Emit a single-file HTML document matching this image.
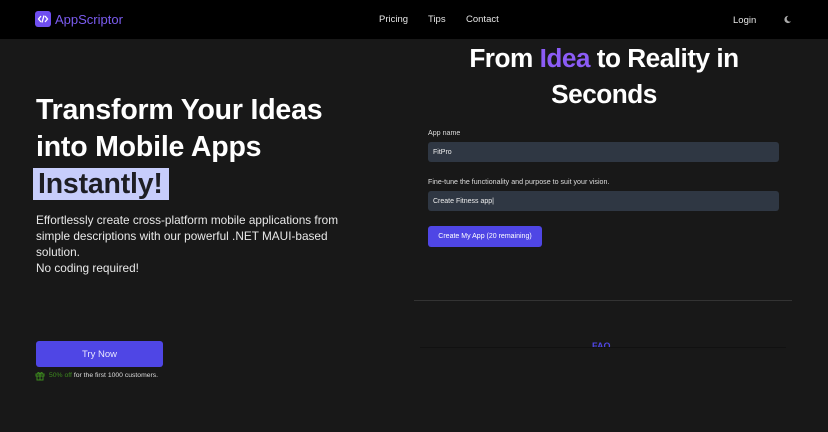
<!DOCTYPE html>
<html><head><meta charset="utf-8"><style>
*{margin:0;padding:0;box-sizing:border-box}
body{width:828px;height:432px;overflow:hidden;background:#181818;font-family:"Liberation Sans",sans-serif;color:#fff;position:relative}
.hdr{position:absolute;left:0;top:0;width:828px;height:39px;background:#000}
.abs{position:absolute;white-space:nowrap}
.nav{font-size:9.5px;color:#e5e5e5}
h1{position:absolute;left:36px;top:92px;font-size:28.5px;font-weight:bold;line-height:37px;letter-spacing:-0.2px}
.hl{background:#c7cdfb;color:#1e1e24;padding:0 6px 0 5px;margin-left:-3px}
.sub{position:absolute;left:36px;top:212px;font-size:11.8px;line-height:16px;color:#e8e8e8}
.inp{position:absolute;left:428px;width:351px;height:20px;background:#2f3743;border-radius:3px;font-size:7px;color:#eee;padding:7px 5px 0}
.lbl{position:absolute;left:428px;font-size:7.1px;color:#ddd}
</style></head><body>
<div class="hdr"></div>
<div class="abs" style="left:35px;top:11px;width:16px;height:16px;background:#6f4ef0;border-radius:3px"></div>
<svg class="abs" style="left:37px;top:13px" width="12" height="12" viewBox="0 0 12 12"><path d="M4 3L1.5 6 4 9M8 3l2.5 3L8 9M7 2.5L5 9.5" stroke="#fff" stroke-width="1.3" fill="none"/></svg>
<div class="abs" style="left:55px;top:12px;font-size:13px;color:#7b5cf0">AppScriptor</div>
<div class="abs nav" style="left:379px;top:14px">Pricing</div>
<div class="abs nav" style="left:428px;top:14px">Tips</div>
<div class="abs nav" style="left:466px;top:14px">Contact</div>
<div class="abs nav" style="left:733px;top:15px">Login</div>
<svg class="abs" style="left:783px;top:15px" width="9" height="9" viewBox="0 0 10 10"><path d="M6 1A4 4 0 1 0 9 7 3.3 3.3 0 0 1 6 1z" fill="#aaa"/></svg>
<h1>Transform Your Ideas<br>into Mobile Apps<br><span class="hl">Instantly!</span></h1>
<div class="sub">Effortlessly create cross-platform mobile applications from<br>simple descriptions with our powerful .NET MAUI-based<br>solution.<br>No coding required!</div>
<div class="abs" style="left:36px;top:341px;width:127px;height:26px;background:#4f46e5;border-radius:3px;font-size:9.5px;color:#e8e6ff;text-align:center;line-height:27px">Try Now</div>
<svg class="abs" style="left:35px;top:371px" width="10" height="10" viewBox="0 0 10 10"><path d="M1 3h8v2H1zM2 5h6v4H2zM5 3v6M5 3C4 1 2 1 3 3M5 3C6 1 8 1 7 3" stroke="#3d8a1e" stroke-width="1" fill="none"/></svg>
<div class="abs" style="left:49px;top:372px;font-size:6.8px;color:#ddd"><span style="color:#3d8a1e">50% off</span> for the first 1000 customers.</div>
<div class="abs" style="left:414px;top:40px;width:380px;text-align:center;font-size:26.2px;font-weight:bold;line-height:36px;letter-spacing:-0.5px">From <span style="color:#8b5cf6">Idea</span> to Reality in<br>Seconds</div>
<div class="lbl" style="top:129px">App name</div>
<div class="inp" style="top:142px">FitPro</div>
<div class="lbl" style="top:178px">Fine-tune the functionality and purpose to suit your vision.</div>
<div class="inp" style="top:191px">Create Fitness app|</div>
<div class="abs" style="left:428px;top:226px;width:114px;height:21px;background:#4f46e5;border-radius:3px;font-size:7px;text-align:center;line-height:22px">Create My App (20 remaining)</div>
<div class="abs" style="left:414px;top:300px;width:378px;height:1px;background:#333"></div>
<div class="abs" style="left:592px;top:341px;font-size:9px;font-weight:bold;color:#4f46e5;height:6px;overflow:hidden">FAQ</div>
<div class="abs" style="left:420px;top:347px;width:366px;height:1px;background:#111"></div>
</body></html>
